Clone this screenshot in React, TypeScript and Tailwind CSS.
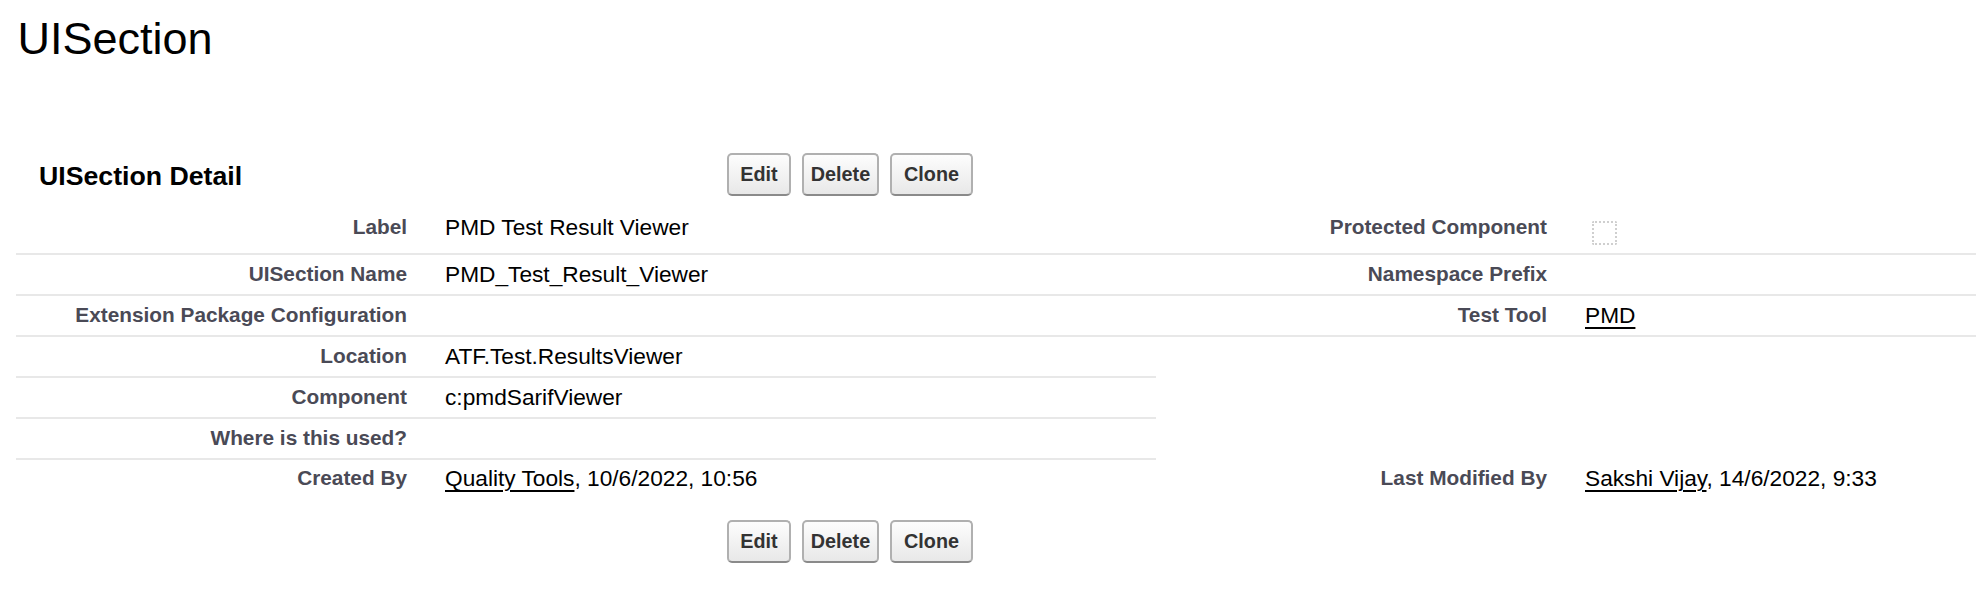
import React from "react";

const labelCls =
  "w-[410px] shrink-0 pr-[19px] text-right text-[20.8px] font-bold leading-[26px] text-[#4a4a56]";
const dataCls = "w-[730px] shrink-0 pl-[19px] text-[22.7px] leading-[26px] text-black";

function Buttons() {
  const btn =
    "flex h-[43px] items-center justify-center rounded-[5px] border-2 border-[#b0b0b0] border-b-[#8a8a8a] bg-linear-to-b from-[#fdfdfd] to-[#e8e8e8] text-[19.8px] font-bold text-[#333]";
  return (
    <div className="flex items-center gap-[11px]">
      <button className={`${btn} w-[64px]`}>Edit</button>
      <button className={`${btn} w-[77px]`}>Delete</button>
      <button className={`${btn} w-[83px]`}>Clone</button>
    </div>
  );
}

type Cell = { text?: React.ReactNode; border: boolean };

function Row({
  cells,
  h,
  pt,
}: {
  cells: [Cell, Cell, Cell, Cell];
  h: string;
  pt: string;
}) {
  return (
    <div className={`flex ${h}`}>
      {cells.map((c, i) => (
        <div
          key={i}
          className={`${i % 2 === 0 ? labelCls : dataCls} ${pt} ${
            c.border ? "border-b-2 border-[#e8e8e8]" : ""
          }`}
        >
          {c.text}
        </div>
      ))}
    </div>
  );
}

function Link({ children }: { children: React.ReactNode }) {
  return (
    <span className="underline decoration-[2px] underline-offset-[4px]">{children}</span>
  );
}

export default function App() {
  return (
    <div className="min-h-[610px] w-full overflow-hidden bg-white font-['Liberation_Sans',Arial,sans-serif]">
      <h1 className="pl-[17.5px] pt-[13px] text-[45px] font-normal leading-[52px] text-black">
        UISection
      </h1>
      <div className="ml-[16px] w-[2280px]">
        <div className="mt-[88px] flex h-[43px] items-center">
          <div className="w-[711px] shrink-0 pl-[23px] pt-[2px] text-[26.7px] font-bold leading-[30px] text-black">
            UISection Detail
          </div>
          <Buttons />
        </div>

        <div className="mt-[13px]">
          <div className="flex h-[46px]">
            <div className={`${labelCls} pt-[5px] border-b-2 border-[#e8e8e8]`}>Label</div>
            <div className={`${dataCls} pt-[5px] border-b-2 border-[#e8e8e8]`}>
              PMD Test Result Viewer
            </div>
            <div className={`${labelCls} pt-[5px] border-b-2 border-[#e8e8e8]`}>
              Protected Component
            </div>
            <div className={`${dataCls} pt-[5px] border-b-2 border-[#e8e8e8]`}>
              <div className="ml-[7px] mt-[7px] h-[24px] w-[25px] rounded-[2px] border-2 border-dotted border-[#cfcfcf]" />
            </div>
          </div>
          <Row
            h="h-[41px]"
            pt="pt-[6px]"
            cells={[
              { text: "UISection Name", border: true },
              { text: "PMD_Test_Result_Viewer", border: true },
              { text: "Namespace Prefix", border: true },
              { text: "", border: true },
            ]}
          />
          <Row
            h="h-[41px]"
            pt="pt-[6px]"
            cells={[
              { text: "Extension Package Configuration", border: true },
              { text: "", border: true },
              { text: "Test Tool", border: true },
              { text: <Link>PMD</Link>, border: true },
            ]}
          />
          <Row
            h="h-[41px]"
            pt="pt-[6px]"
            cells={[
              { text: "Location", border: true },
              { text: "ATF.Test.ResultsViewer", border: true },
              { text: "", border: false },
              { text: "", border: false },
            ]}
          />
          <Row
            h="h-[41px]"
            pt="pt-[6px]"
            cells={[
              { text: "Component", border: true },
              { text: "c:pmdSarifViewer", border: true },
              { text: "", border: false },
              { text: "", border: false },
            ]}
          />
          <Row
            h="h-[41px]"
            pt="pt-[6px]"
            cells={[
              { text: "Where is this used?", border: true },
              { text: "", border: true },
              { text: "", border: false },
              { text: "", border: false },
            ]}
          />
          <Row
            h="h-[39px]"
            pt="pt-[5px]"
            cells={[
              { text: "Created By", border: false },
              {
                text: (
                  <>
                    <Link>Quality Tools</Link>, 10/6/2022, 10:56
                  </>
                ),
                border: false,
              },
              { text: "Last Modified By", border: false },
              {
                text: (
                  <>
                    <Link>Sakshi Vijay</Link>, 14/6/2022, 9:33
                  </>
                ),
                border: false,
              },
            ]}
          />
        </div>

        <div className="mt-[21px] flex h-[43px] items-center">
          <div className="w-[711px] shrink-0" />
          <Buttons />
        </div>
      </div>
    </div>
  );
}
